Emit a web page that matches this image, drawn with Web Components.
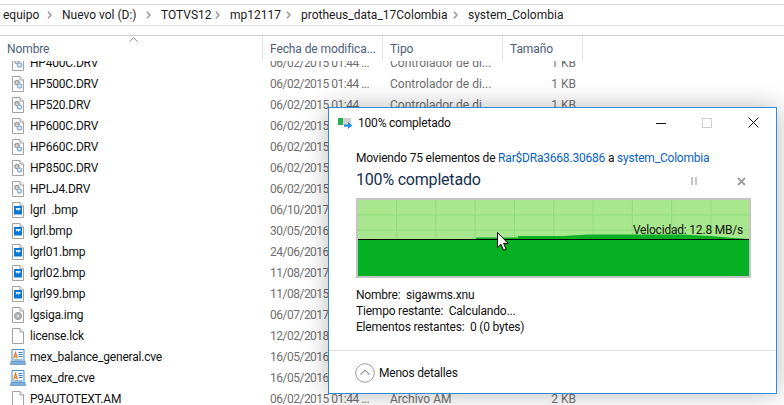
<!DOCTYPE html>
<html lang="es"><head><meta charset="utf-8"><title>Explorador</title>
<style>
html,body{margin:0;padding:0;background:#fff;height:405px;overflow:hidden}
body{font:12px/16px Roboto,"Noto Sans",sans-serif;color:#111;letter-spacing:-.2px}
</style></head><body>
<explorer-window>
  <address-bar slot="address">
    <bread-crumb w="59">equipo</bread-crumb>
    <bread-crumb w="99">Nuevo vol (D:)</bread-crumb>
    <bread-crumb w="69">TOTVS12</bread-crumb>
    <bread-crumb w="71">mp12117</bread-crumb>
    <bread-crumb w="167">protheus_data_17Colombia</bread-crumb>
    <bread-crumb last>system_Colombia</bread-crumb>
  </address-bar>
  <list-header slot="header"></list-header>
  <file-list slot="list">
    <file-row kind="drv" name="HP400C.DRV" date="06/02/2015 01:44 ..." type="Controlador de di..." size="1 KB"></file-row>
    <file-row kind="drv" name="HP500C.DRV" date="06/02/2015 01:44 ..." type="Controlador de di..." size="1 KB"></file-row>
    <file-row kind="drv" name="HP520.DRV" date="06/02/2015 01:44 ..." type="Controlador de di..." size="1 KB"></file-row>
    <file-row kind="drv" name="HP600C.DRV" date="06/02/2015"></file-row>
    <file-row kind="drv" name="HP660C.DRV" date="06/02/2015"></file-row>
    <file-row kind="drv" name="HP850C.DRV" date="06/02/2015"></file-row>
    <file-row kind="drv" name="HPLJ4.DRV" date="06/02/2015"></file-row>
    <file-row kind="bmp" name="lgrl  .bmp" date="06/10/2017"></file-row>
    <file-row kind="bmp" name="lgrl.bmp" date="30/05/2016"></file-row>
    <file-row kind="bmp" name="lgrl01.bmp" date="24/06/2016"></file-row>
    <file-row kind="bmp" name="lgrl02.bmp" date="11/08/2017"></file-row>
    <file-row kind="bmp" name="lgrl99.bmp" date="11/08/2015"></file-row>
    <file-row kind="img" name="lgsiga.img" date="06/07/2017"></file-row>
    <file-row kind="blank" name="license.lck" date="12/02/2018"></file-row>
    <file-row kind="cve" name="mex_balance_general.cve" date="16/05/2016"></file-row>
    <file-row kind="cve" name="mex_dre.cve" date="16/05/2016"></file-row>
    <file-row kind="blank" name="P9AUTOTEXT.AM" date="06/02/2015 01:44 ..." type="Archivo AM" size="2 KB"></file-row>
  </file-list>
  <copy-dialog slot="dialog"></copy-dialog>
</explorer-window>
<script>
function def(name, css, html, init){
  customElements.define(name, class extends HTMLElement{
    connectedCallback(){
      if(this.shadowRoot) return;
      const r=this.attachShadow({mode:'open'});
      const h=typeof html==='function'?html(this):html;
      r.innerHTML='<style>'+css+'</style>'+h;
      if(init) init(this,r);
    }
  });
}
def('explorer-window',
 ':host{display:block;position:relative;width:784px;height:405px;overflow:hidden;background:#fff}',
 '<slot name="address"></slot><slot name="header"></slot><slot name="list"></slot><slot name="dialog"></slot>');
def('address-bar',
 ':host{display:flex;align-items:center;height:20px;margin-top:4px;padding-left:3px;border-top:1px solid #dcdcdc;border-bottom:1px solid #dcdcdc;color:#1a1a1a;white-space:nowrap;letter-spacing:0}',
 '<slot></slot>');
def('bread-crumb',
 ':host{display:flex;align-items:center;flex:none;position:relative}svg{position:absolute;right:10px;top:4px}',
 h=>{const w=h.getAttribute('w');if(w)h.style.width=w+'px';
   return '<span><slot></slot></span>'+(h.hasAttribute('last')?'':'<svg width="5" height="8" viewBox="0 0 5 8"><path d="M1 .8 4 4 1 7.2" fill="none" stroke="#9a9a9a" stroke-width="1.6"/></svg>');});
def('list-header',
 ':host{display:grid;grid-template-columns:263px 120px 120px 80px;height:25px;margin-top:9px;border-top:1px solid #d0d0d0;color:#4c607a;position:relative;letter-spacing:-.1px}'+
 'div{padding:5px 0 0 7px;border-right:1px solid #e5e5e5;white-space:nowrap;overflow:hidden;height:20px}'+
 'div:first-child{padding-left:9px}svg{position:absolute;left:129px;top:1px}',
 '<svg width="9" height="5" viewBox="0 0 9 5"><path d="M.5 4.5 4.5.7 8.5 4.5" fill="none" stroke="#8a8a8a"/></svg><div>Nombre</div><div>Fecha de modifica...</div><div>Tipo</div><div>Tamaño</div>');
def('file-list',
 ':host{display:block;height:344px;overflow:hidden}.in{margin-top:-9px}',
 '<div class="in"><slot></slot></div>');
def('file-row',
 ':host{display:grid;grid-template-columns:263px 120px 120px 73px;height:21px;align-items:center;white-space:pre}'+
 '.n{display:flex;align-items:center;padding-left:12px}.n span{margin-left:6px;color:#111}'+
 '.d{padding-left:7px;color:#6f6f6f;letter-spacing:-.5px}.t{padding-left:7px;color:#6f6f6f;letter-spacing:0}.s{text-align:right;color:#6f6f6f;letter-spacing:0}',
 h=>{const a=k=>h.getAttribute(k)||'';
   return '<div class="n"><file-icon kind="'+a('kind')+'"></file-icon><span>'+a('name')+'</span></div><div class="d">'+a('date')+'</div><div class="t">'+a('type')+'</div><div class="s">'+a('size')+'</div>';});
const page='<path d="M.5.5H8L11.5 4V15.5H.5Z" fill="#fff" stroke="#a2a2a2"/><path d="M8 .5V4H11.5" fill="#f0f0f0" stroke="#a2a2a2"/>';
const icons={
 drv:page+'<g fill="none"><circle cx="5" cy="6.5" r="2" stroke="#9c9c9c" stroke-width="1.6"/><circle cx="7.5" cy="10" r="2" stroke="#8fb4d8" stroke-width="1.6"/><path d="M3 4 7 8M3 8l2-3" stroke="#b8b8b8"/></g>',
 bmp:page+'<rect x="2" y="4" width="8" height="8.5" fill="#0a78d2"/><path d="M3.5 6H8.5V7L8 8.5 7.3 7.3 6.5 9.3 5.7 7.3 4.8 8.8 4 7.3Z" fill="#e8f4fc"/>',
 img:page+'<circle cx="6" cy="9" r="3.6" fill="#b4b4b4" stroke="#a0a0a0"/><circle cx="6" cy="9" r="1" fill="#ececec"/>',
 blank:page,
 cve:'<path d="M1.5.5H13.5V13H1.5Z" fill="#eef5fc" stroke="#4f8fc8"/><path d="M.5 12.5H14.5L15 15.5H0Z" fill="#7fb0dc" stroke="#4f8fc8" stroke-width=".7"/><path d="M3.2 9.5 5 3.5 6.8 9.5M3.9 7.6H6.1" fill="none" stroke="#e47a1c" stroke-width="1.1"/><path d="M8 3.5H12M8 5.5H12M8 7.5H12M3 11H12" stroke="#4a86c0"/>'
};
def('file-icon',
 ':host{display:block;width:12px;height:16px;flex:none}svg{display:block;overflow:visible}',
 h=>{const k=h.getAttribute('kind');
   return '<svg width="12" height="16" viewBox="0 0 12 16" style="'+(k==='cve'?'transform:translateX(-1.5px)':'')+'">'+icons[k]+'</svg>';});
def('copy-dialog',
 ':host{display:flex;flex-direction:column;position:absolute;left:328px;top:107px;width:447px;height:285px;background:#fff;border:1px solid #2b8fd8;box-shadow:0 0 24px rgba(0,0,0,.28);color:#111}',
 '<title-bar></title-bar><progress-panel></progress-panel><dialog-footer></dialog-footer>');
def('title-bar',
 ':host{display:flex;align-items:center;height:29px;flex:none;padding-left:9px;position:relative}'+
 'span{margin-left:5px;flex:1}.b{width:46px;height:29px;display:flex;align-items:center;justify-content:center;flex:none}',
 '<svg width="15" height="12" viewBox="0 0 15 12"><rect x="0" y="1" width="13" height="7" fill="#cfcfcf"/><rect x="0" y="1" width="5" height="7" fill="#22b14c"/><path d="M6 7.5H10V5L14.5 8.5 10 12V9.7H6Z" fill="#2b8fd8"/></svg>'+
 '<span>100% completado</span>'+
 '<div class="b"><svg width="10" height="10"><path d="M0 5.5H10" stroke="#111"/></svg></div>'+
 '<div class="b"><svg width="10" height="10"><rect x=".5" y=".5" width="9" height="9" fill="none" stroke="#cfcfcf"/></svg></div>'+
 '<div class="b"><svg width="11" height="11"><path d="M.5.5 10.5 10.5M10.5.5.5 10.5" stroke="#111"/></svg></div>');
def('progress-panel',
 ':host{display:flex;flex-direction:column;flex:1;padding:13px 26px 0 27px}'+
 '.m a{color:#0a5fc4;text-decoration:none}.m{height:20px}'+
 '.h{display:flex;align-items:center;height:20px;font-size:16px;color:#14304f}.h span{flex:1}.h svg{flex:none}'+
 '.g{margin-top:8px}.i{margin-top:9px;line-height:16px}',
 '<div class="m">Moviendo 75 elementos de <a>Rar$DRa3668.30686</a> a <a>system_Colombia</a></div>'+
 '<div class="h"><span>100% completado</span>'+
 '<svg width="6" height="8" style="margin-right:40px;margin-top:2px"><path d="M1 0V8M5 0V8" stroke="#c4c4c4" stroke-width="2"/></svg>'+
 '<svg width="9" height="9" style="margin-right:4px;margin-top:2px"><path d="M1 1 8 8M8 1 1 8" stroke="#a0a0a0" stroke-width="2"/></svg></div>'+
 '<speed-graph class="g"></speed-graph>'+
 '<div class="i"><div>Nombre:&nbsp; sigawms.xnu</div><div>Tiempo restante:&nbsp; Calculando...</div><div>Elementos restantes:&nbsp; 0 (0 bytes)</div></div>');
def('speed-graph',
 ':host{display:block;position:relative;width:391px;height:76px;border:2px solid #c4c4c4;background:#a9e78e}'+
 'svg.c{display:block}.v{position:absolute;right:6px;top:22px;color:#111;white-space:nowrap}svg.p{position:absolute;left:139px;top:32px}',
 (()=>{let g='';for(let x=38.5;x<391;x+=39.3)g+='<path d="M'+x+' 0V76" stroke="#8fdc78"/>';
   g+='<path d="M0 15H391M0 30H391" stroke="#8fdc78"/>';
   return '<svg class="c" width="391" height="76" viewBox="0 0 391 76">'+g+
   '<path d="M0 39H118V37.5H160V36H205L230 34.5H322L352 36L376 38L391 39V76H0Z" fill="#06b025"/><path d="M0 39.5H391" stroke="#000"/></svg>'+
   '<div class="v">Velocidad: 12.8 MB/s</div>'+
   '<svg class="p" width="12" height="19" viewBox="0 0 12 19"><path d="M.5.5V15.5L4 12.3 6.6 18.3 9.2 17.2 6.6 11.4H11.2Z" fill="#fff" stroke="#000"/></svg>';})());
def('dialog-footer',
 ':host{display:flex;align-items:center;height:41px;flex:none;border-top:1px solid #e2e2e2;padding:1px 0 0 26px}span{margin-left:4px}',
 '<svg width="20" height="20" viewBox="0 0 20 20"><circle cx="10" cy="10" r="9.3" fill="none" stroke="#9a9a9a"/><path d="M5.5 11.5 10 7l4.5 4.5" fill="none" stroke="#9a9a9a" stroke-width="1.2"/></svg><span>Menos detalles</span>');
</script>
</body></html>
